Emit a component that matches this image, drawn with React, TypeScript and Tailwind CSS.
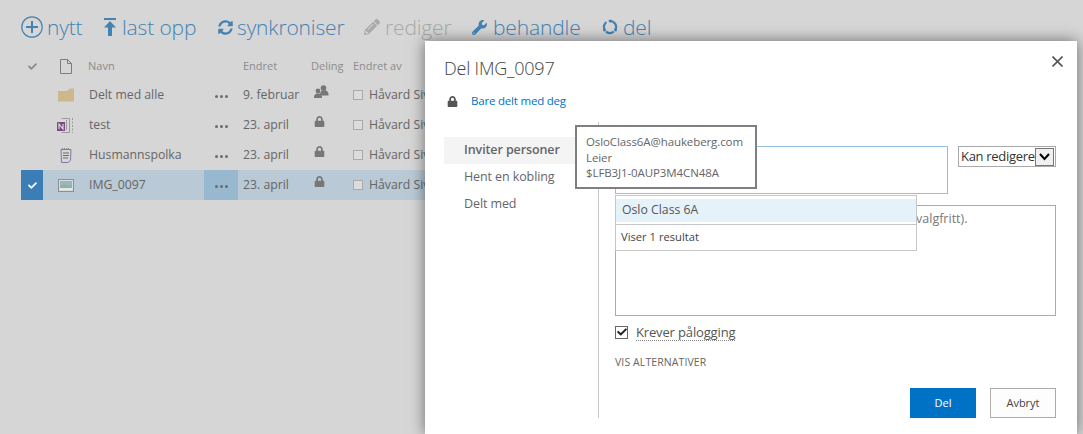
import React from "react";
import { FaLock, FaCheck, FaPencilAlt, FaWrench, FaSyncAlt } from "react-icons/fa";

const font = { fontFamily: '"Open Sans","Noto Sans",sans-serif' };

function Dots() {
  return (
    <span className="flex gap-[2px]">
      <i className="w-[3px] h-[3px] rounded-full bg-[#6b6b6b]" />
      <i className="w-[3px] h-[3px] rounded-full bg-[#6b6b6b]" />
      <i className="w-[3px] h-[3px] rounded-full bg-[#6b6b6b]" />
    </span>
  );
}

const FolderIcon = () => (
  <svg width="16" height="14" viewBox="0 0 16 14"><path d="M0 3h9l3-2.500h4V13.500H0z" fill="#cdb78d" /></svg>
);
const NoteIcon = () => (
  <svg width="17" height="17" viewBox="0 0 17 17" fill="none">
    <path d="M4.500 1.500h8v14h-8" stroke="#9a9a9a" />
    <path d="M15.500 1v15" stroke="#9a9a9a" strokeDasharray="2 1.500" />
    <path d="M9.500 3v10" stroke="#9a9a9a" />
    <rect x="0" y="5" width="8" height="9" fill="#7e4a84" />
    <path d="M2 12V7l4 5V7" stroke="#e8dce9" strokeWidth="1.100" />
  </svg>
);
const PadIcon = () => (
  <svg width="12" height="15" viewBox="0 0 12 15" fill="none">
    <path d="M1 1.500h10l-.5 11-2.500 2H1.500z" stroke="#7f78a8" fill="#d6d6d6" />
    <path d="M3 5h6M3 7.500h6M3 10h5" stroke="#6b6b6b" />
    <path d="M2 .5h8" stroke="#8a8a8a" strokeDasharray="1 1" />
  </svg>
);
const ImageIcon = () => (
  <svg width="16" height="13" viewBox="0 0 16 13" fill="none">
    <rect x=".5" y=".5" width="15" height="12" stroke="#8f8f8f" fill="#d6dde0" />
    <rect x="2" y="2" width="12" height="5" fill="#9db6bc" />
    <path d="M2 7l4-2 4 2 4-1v4H2z" fill="#8fb29c" />
    <rect x="2" y="9" width="12" height="2" fill="#e4e8e8" />
  </svg>
);
const GroupIcon = () => (
  <svg width="15" height="13" viewBox="0 0 15 13" fill="#777">
    <circle cx="9.500" cy="3" r="2.800" />
    <path d="M5.500 12c0-4 1.500-5.500 4-5.500s4.500 1.500 4.500 4.500v1z" transform="translate(0.500 -1.500)" />
    <circle cx="4" cy="6" r="2.400" />
    <path d="M0 13c0-3.500 1.500-4.500 4-4.500S8 9.500 8 13z" />
  </svg>
);

const lock = <FaLock size={11} />;
const rows = [
  { name: "Delt med alle", date: "9. februar", icon: <FolderIcon />, share: <GroupIcon /> },
  { name: "test", date: "23. april", icon: <NoteIcon />, share: lock },
  { name: "Husmannspolka", date: "23. april", icon: <PadIcon />, share: lock },
  { name: "IMG_0097", date: "23. april", icon: <ImageIcon />, share: lock, sel: true },
];

function Tool({ icon, label, cls, gap }: { icon: React.ReactNode; label: string; cls: string; gap: string }) {
  return (
    <div className={`flex items-center ${gap} ${cls}`}>
      {icon}
      <span className="text-[21px] leading-[28px] font-light tracking-[-0.15px]">{label}</span>
    </div>
  );
}

export default function App() {
  return (
    <div className="relative w-[1083px] h-[434px] overflow-hidden bg-[#d6d6d6] text-[#666]" style={font}>
      <div className="flex items-start pl-[21px] pt-[13px] h-[52px] text-[#4383b4]">
        <Tool
          gap="gap-[4px]"
          cls="w-[82px]"
          label="nytt"
          icon={
            <svg width="22" height="22" viewBox="0 0 22 22" fill="none" stroke="#4383b4">
              <circle cx="11" cy="11" r="10.200" strokeWidth="1.200" />
              <path d="M11 5v12M5 11h12" strokeWidth="2" />
            </svg>
          }
        />
        <Tool
          gap="gap-[5px]"
          cls="w-[115px]"
          label="last opp"
          icon={
            <svg width="14" height="18" viewBox="0 0 14 18" fill="#4383b4">
              <rect x="1" y="0" width="12" height="2" />
              <path d="M7 3l6 6.500H9V18H5V9.500H1z" />
            </svg>
          }
        />
        <Tool gap="gap-[4px]" cls="w-[146px]" label="synkroniser" icon={<FaSyncAlt size={15} />} />
        <Tool gap="gap-[5px]" cls="w-[108px] text-[#a9a9a9]" label="rediger" icon={<FaPencilAlt size={16} />} />
        <Tool gap="gap-[6px]" cls="w-[130px]" label="behandle" icon={<FaWrench size={15} />} />
        <Tool
          gap="gap-[5px]"
          cls="w-[60px]"
          label="del"
          icon={
            <svg width="16" height="16" viewBox="0 0 16 16" fill="none" stroke="#4383b4" strokeWidth="2.200">
              <circle cx="8" cy="8" r="6" strokeDasharray="8 2.500" transform="rotate(-50 8 8)" />
              <circle cx="8.500" cy="2" r="1.500" fill="#4383b4" stroke="none" />
              <circle cx="2.500" cy="11" r="1.500" fill="#4383b4" stroke="none" />
              <circle cx="13.500" cy="11" r="1.500" fill="#4383b4" stroke="none" />
            </svg>
          }
        />
      </div>

      <div className="flex items-center h-[28px] pl-[21px] text-[11px] text-[#8c8c8c]">
        <div className="w-[22px] flex justify-center text-[#8a8a8a]"><FaCheck size={9} /></div>
        <div className="w-[45px] flex justify-center">
          <svg width="12" height="15" viewBox="0 0 12 15" fill="none" stroke="#7d7d7d">
            <path d="M.5.5h7l4 4v10H.5zM7.500.5v4h4" />
          </svg>
        </div>
        <div className="w-[155px]">Navn</div>
        <div className="w-[68px]">Endret</div>
        <div className="w-[42px]">Deling</div>
        <div>Endret av</div>
      </div>

      {rows.map((r) => (
        <div key={r.name} className={`flex items-center h-[30px] ml-[21px] w-[1000px] text-[12.250px] ${r.sel ? "bg-[#b9c9d6]" : ""}`}>
          <div className={`w-[22px] h-full flex items-center justify-center ${r.sel ? "bg-[#3b7db5] text-white" : ""}`}>
            {r.sel && <FaCheck size={9} />}
          </div>
          <div className="w-[45px] flex justify-center">{r.icon}</div>
          <div className="w-[116px] pl-[1px] whitespace-nowrap">{r.name}</div>
          <div className={`w-[34px] h-full flex items-center justify-center pt-[3px] ${r.sel ? "bg-[#97b8cf]" : ""}`}>
            <Dots />
          </div>
          <div className="w-[5px]" />
          <div className="w-[68px] whitespace-nowrap">{r.date}</div>
          <div className="w-[42px] text-[#777] pl-[3px] pb-[7px]">{r.share}</div>
          <div className="flex items-center gap-[6px] whitespace-nowrap">
            <span className="w-[10px] h-[10px] border border-[#aaa] bg-[#dcdcdc]" />
            Håvard Sivertsen
          </div>
        </div>
      ))}

      {/* Dialog */}
      <div className="absolute left-[425px] top-[41px] w-[652px] h-[393px] bg-white shadow-[0_0_14px_rgba(0,0,0,0.5)] text-[#444] pl-[19px] pr-[21px] pt-[14px]">
        <svg className="absolute right-[14px] top-[15px]" width="11" height="11" viewBox="0 0 11 11" stroke="#555" strokeWidth="1.600">
          <path d="M.5.5l10 10M10.500.5l-10 10" />
        </svg>
        <h1 className="text-[18px] leading-[26px] font-light tracking-[-0.2px]">Del IMG_0097</h1>
        <div className="flex items-center mt-[11px] h-[18px]">
          <span className="w-[27px] pl-[3px] text-[#555]"><FaLock size={11} /></span>
          <span className="text-[11.500px] text-[#0072c6] tracking-[-0.2px]">Bare delt med deg</span>
        </div>
        <div className="flex mt-[12px]">
          <div className="w-[155px] h-[296px] border-r border-[#c6c6c6] text-[12.500px] text-[#666] pt-[15px] tracking-[-0.1px]">
            <div className="h-[27px] bg-[#f4f4f4] pl-[20px] flex items-center font-semibold mr-[20px]">Inviter personer</div>
            <div className="h-[27px] pl-[20px] flex items-center">Hent en kobling</div>
            <div className="h-[27px] pl-[20px] flex items-center">Delt med</div>
          </div>
          <div className="flex-1 pl-[16px] pt-[24px]">
            <div className="flex justify-between">
              <div className="w-[333px] h-[48px] border border-[#92c0e0]" />
              <div className="w-[98px] h-[21px] border border-[#a9a9a9] flex items-center justify-between pl-[2px] pr-[1px] text-[13px] text-[#333] whitespace-nowrap">
                <span className="tracking-[-0.3px]">Kan redigere</span>
                <span className="w-[19px] h-[18px] bg-[#f0f0f0] border border-[#777] flex items-center justify-center shrink-0">
                  <svg width="11" height="8" viewBox="0 0 11 8" fill="none" stroke="#000" strokeWidth="2"><path d="M1 1l4.500 5L10 1" /></svg>
                </span>
              </div>
            </div>
            <div className="h-[111px] mt-[11px] border border-[#ababab] text-[12.500px] text-[#777] px-[6px] py-[4px] whitespace-nowrap">
              Legg til en personlig melding i denne invitasjonen (valgfritt).
            </div>
            <div className="flex items-center mt-[8px] h-[16px]">
              <span className="w-[13px] h-[13px] border border-[#666] flex items-center justify-center text-[#222] mr-[8px]"><FaCheck size={10} /></span>
              <span className="text-[13px] tracking-[-0.15px] text-[#555] border-b border-dotted border-[#888] leading-[16px]">Krever pålogging</span>
            </div>
            <div className="mt-[15px] text-[10.500px] text-[#666] tracking-[0.1px]">VIS ALTERNATIVER</div>
            <div className="flex justify-end gap-[14px] mt-[17px]">
              <div className="w-[66px] h-[30px] bg-[#0072c6] text-white text-[11px] flex items-center justify-center">Del</div>
              <div className="w-[66px] h-[30px] bg-[#fdfdfd] border border-[#ababab] text-[11px] flex items-center justify-center">Avbryt</div>
            </div>
          </div>
        </div>
      </div>

      {/* Suggestion dropdown */}
      <div className="absolute left-[615px] top-[195px] w-[302px] h-[56px] bg-white border border-[#c6c6c6] text-[12.250px] text-[#555]">
        <div className="mt-[3px] h-[23px] bg-[#e6f2fa] pl-[6px] flex items-center">Oslo Class 6A</div>
        <div className="mt-[2px] border-t border-[#c6c6c6] h-[26px] pl-[5px] flex items-center text-[11.200px] text-[#444]">Viser 1 resultat</div>
      </div>

      {/* Tooltip */}
      <div className="absolute left-[575px] top-[125px] w-[182px] h-[64px] bg-white border-2 border-[#7f7f7f] pl-[9px] pt-[7px] text-[11.500px] leading-[15.500px] text-[#666] whitespace-nowrap tracking-[-0.1px]">
        <div>OsloClass6A@haukeberg.com</div>
        <div>Leier</div>
        <div>$LFB3J1-0AUP3M4CN48A</div>
      </div>
    </div>
  );
}
